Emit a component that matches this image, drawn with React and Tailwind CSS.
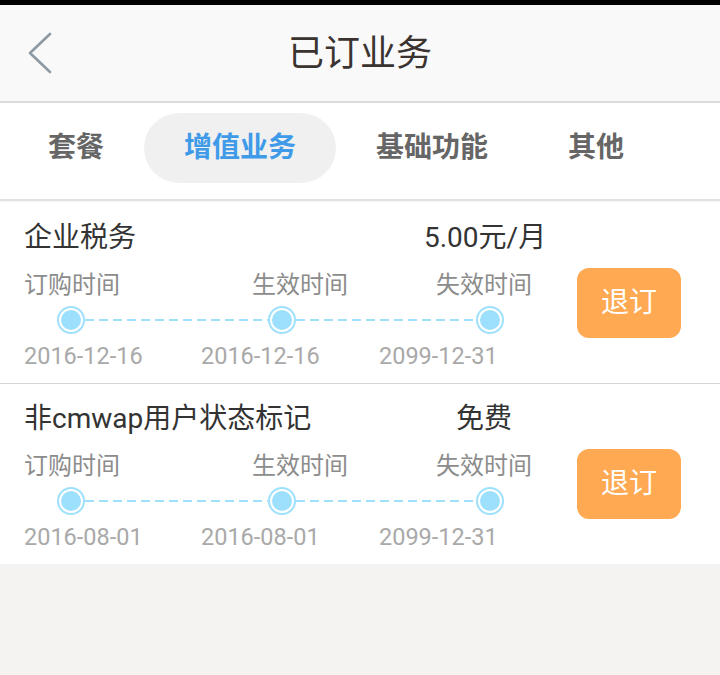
import React from "react";

const FONT = { fontFamily: "Roboto, 'Noto Sans CJK SC', 'Noto Sans', sans-serif" };

function Timeline() {
  const c = "#9fe1fc";
  return (
    <svg width="520" height="30" viewBox="0 0 520 30">
      <line x1="61" y1="15" x2="244" y2="15" stroke={c} strokeWidth="2" strokeDasharray="9 5" />
      <line x1="272" y1="15" x2="452" y2="15" stroke={c} strokeWidth="2" strokeDasharray="9 5" />
      {[47, 258, 466].map((x) => (
        <g key={x}>
          <circle cx={x} cy="15" r="13" fill="#fff" stroke={c} strokeWidth="2" />
          <circle cx={x} cy="15" r="10" fill="#9de0fe" />
        </g>
      ))}
    </svg>
  );
}

function Item({ name, price, d1, d2, d3, pt, border }) {
  return (
    <div className={`bg-white px-[24px] ${pt} pb-[9px] ${border ? "border-b border-[#d6d6d6]" : ""}`}>
      <div className="flex w-[520px] h-[40px] items-center">
        <div className="flex-1 text-[28px] text-[#333] leading-none">{name}</div>
        <div className="w-[120px] text-center text-[28px] text-[#333] leading-none whitespace-nowrap">{price}</div>
      </div>
      <div className="flex mt-[10px]">
        <div className="w-[520px] flex flex-col">
          <div className="flex h-[34px] items-center text-[24px] text-[#8c8c8c] leading-none">
            <div className="w-[228px]">订购时间</div>
            <div className="w-[184px]">生效时间</div>
            <div>失效时间</div>
          </div>
          <div className="mt-[3px] h-[30px]">
            <Timeline />
          </div>
          <div className="flex mt-[5px] h-[34px] items-center text-[23.5px] text-[#a9a9a9] leading-none">
            <div className="w-[177px]">{d1}</div>
            <div className="w-[178px]">{d2}</div>
            <div>{d3}</div>
          </div>
        </div>
        <div className="ml-[33px]">
          <button className="w-[104px] h-[70px] rounded-[12px] bg-[#ffa952] text-white text-[28px] leading-none flex items-center justify-center">
            退订
          </button>
        </div>
      </div>
    </div>
  );
}

export default function App() {
  return (
    <div className="w-[720px] h-[675px] bg-[#f4f3f2] flex flex-col overflow-hidden" style={FONT}>
      <div className="h-[5px] bg-black" />
      <header className="h-[98px] bg-[#f9f9f9] border-b-2 border-[#dcdcdc] grid grid-cols-[1fr_auto_1fr] items-center">
        <div className="pl-[27px] flex items-center">
          <svg width="26" height="42" viewBox="0 0 26 42">
            <polyline points="23,2 3,21 23,40" fill="none" stroke="#8d99a3" strokeWidth="2.6" strokeLinecap="round" strokeLinejoin="round" />
          </svg>
        </div>
        <div className="text-[36px] text-[#3a3330] leading-none pt-[2px]">已订业务</div>
        <div />
      </header>
      <nav className="relative z-10 h-[98px] bg-white border-b-2 border-[#e2e2e2] shadow-[0_1px_2px_rgba(0,0,0,0.06)] flex items-start pt-[10px] pl-[8px]">
        {["套餐", "增值业务", "基础功能", "其他"].map((t, i) => (
          <div
            key={t}
            className={`h-[70px] px-[40px] flex items-center rounded-full text-[28px] font-bold leading-none ${
              i === 1 ? "bg-[#f0f0f0] text-[#3f9ae8]" : "text-[#666]"
            }`}
          >
            {t}
          </div>
        ))}
      </nav>
      <Item name="企业税务" price="5.00元/月" d1="2016-12-16" d2="2016-12-16" d3="2099-12-31" pt="pt-[17px]" border />
      <Item name="非cmwap用户状态标记" price="免费" d1="2016-08-01" d2="2016-08-01" d3="2099-12-31" pt="pt-[15px]" />
    </div>
  );
}
